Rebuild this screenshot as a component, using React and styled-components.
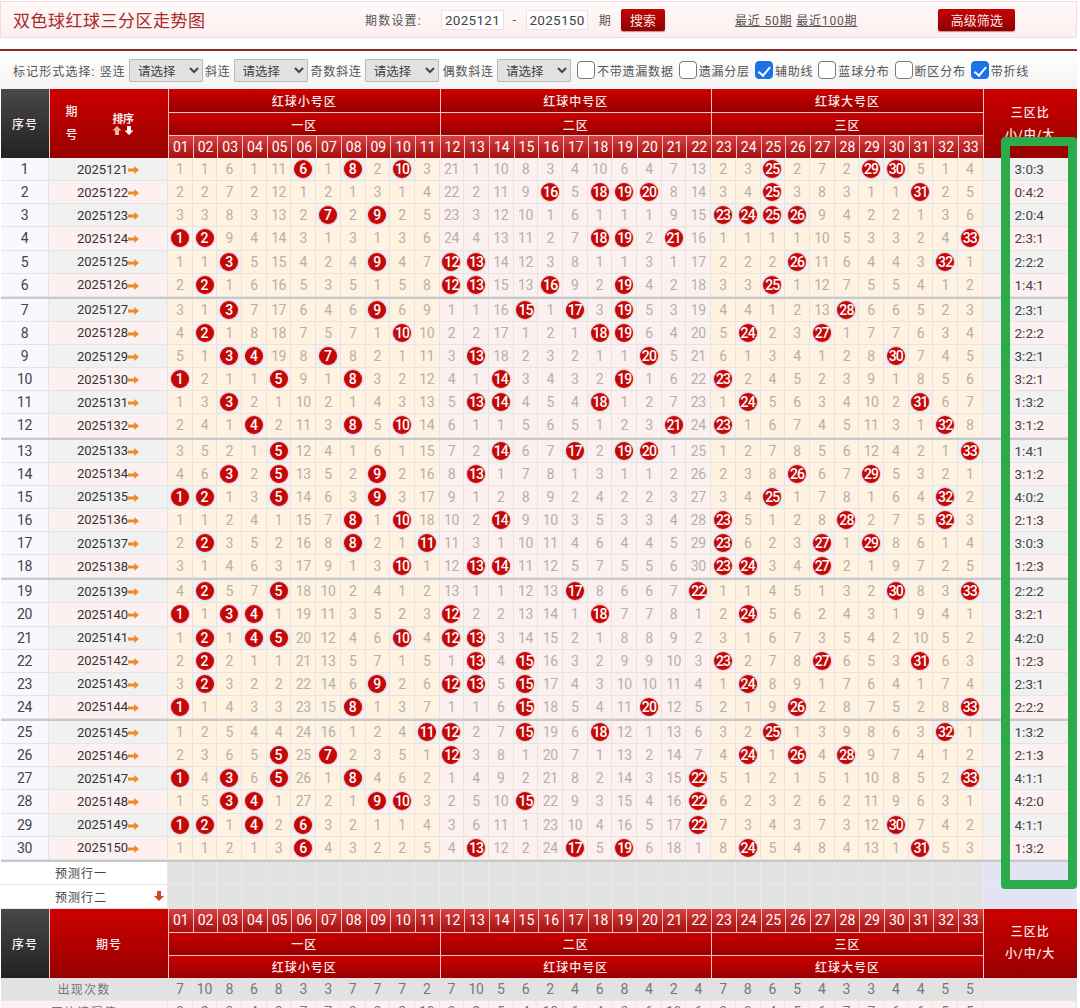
import React from 'react';
import styled, { createGlobalStyle } from 'styled-components';

const GlobalStyle = createGlobalStyle`
  html, body {
    margin: 0;
    padding: 0;
    background: #fff;
    overflow: hidden;
  }
  body {
    font-family: Roboto, "Noto Sans CJK SC", sans-serif;
    color: #333;
  }
`;

const FIRST_ROW = [1, 1, 6, 1, 11, 6, 1, 8, 2, 10, 3, 21, 1, 10, 8, 3, 4, 10, 6, 4, 7, 13, 2, 3, 25, 2, 7, 2, 29, 30, 5, 1, 4];

const DRAWS = [
  [6, 8, 10, 25, 29, 30], [16, 18, 19, 20, 25, 31], [7, 9, 23, 24, 25, 26], [1, 2, 18, 19, 21, 33], [3, 9, 12, 13, 26, 32], [2, 12, 13, 16, 19, 25],
  [3, 9, 15, 17, 19, 28], [2, 10, 18, 19, 24, 27], [3, 4, 7, 13, 20, 30], [1, 5, 8, 14, 19, 23], [3, 13, 14, 18, 24, 31], [4, 8, 10, 21, 23, 32],
  [5, 14, 17, 19, 20, 33], [3, 5, 9, 13, 26, 29], [1, 2, 5, 9, 25, 32], [8, 10, 14, 23, 28, 32], [2, 8, 11, 23, 27, 29], [10, 13, 14, 23, 24, 27],
  [2, 5, 17, 22, 30, 33], [1, 3, 4, 12, 18, 24], [2, 4, 5, 10, 12, 13], [2, 13, 15, 23, 27, 31], [2, 9, 12, 13, 15, 24], [1, 8, 15, 20, 26, 33],
  [11, 12, 15, 18, 25, 32], [5, 7, 12, 24, 26, 28], [1, 3, 5, 8, 22, 33], [3, 4, 9, 10, 15, 22], [1, 2, 4, 6, 22, 30], [6, 13, 17, 19, 24, 31],
];

const NUMBERS = Array.from({ length: 33 }, (_, i) => i + 1);
const pad = (n) => String(n).padStart(2, '0');

// every row is derived from the one above: a hit resets the gap count
const buildRows = () => {
  const rows = [];
  let gaps = FIRST_ROW;
  DRAWS.forEach((draw, i) => {
    if (i > 0) {
      gaps = gaps.map((gap, c) => (DRAWS[i - 1].includes(c + 1) ? 1 : gap + 1));
    }
    const small = draw.filter((n) => n <= 11).length;
    const mid = draw.filter((n) => n > 11 && n <= 22).length;
    rows.push({
      seq: i + 1,
      period: 2025121 + i,
      draw,
      gaps,
      ratio: `${small}:${mid}:${6 - small - mid}`,
    });
  });
  return rows;
};

const ROWS = buildRows();
const COUNTS = NUMBERS.map((n) => DRAWS.filter((d) => d.includes(n)).length);
const AVERAGES = COUNTS.map((c) => Math.floor(30 / (c + 1)));

const COLUMNS = '48px 119px repeat(33, 24.697px) 94px';

const Page = styled.div`
  position: relative;
  width: 1080px;
  height: 1008px;
  overflow: hidden;
`;

const TopBar = styled.div`
  display: flex;
  align-items: center;
  box-sizing: border-box;
  width: 1077px;
  height: 37px;
  margin-top: 1px;
  padding-left: 12px;
  border: 1px solid #f3dcdc;
  background: linear-gradient(#fffafa, #fdeeee);
`;

const Title = styled.h1`
  width: 352px;
  margin: 0;
  font-size: 17px;
  font-weight: 400;
  letter-spacing: 0.5px;
  color: #a92a2a;
  white-space: nowrap;
`;

const BarLabel = styled.span`
  width: ${(p) => p.$width}px;
  font-size: 12px;
  letter-spacing: 1.2px;
  color: #555;
  white-space: nowrap;
  text-align: ${(p) => p.$align || 'left'};
`;

const PeriodInput = styled.input`
  box-sizing: border-box;
  width: ${(p) => p.$width}px;
  height: 20px;
  padding: 0;
  border: 1px solid #f2e0e0;
  background: #fff;
  font-family: Roboto, sans-serif;
  font-size: 13.5px;
  letter-spacing: 0.3px;
  color: #444;
  text-align: center;
  outline: none;
`;

const RedButton = styled.button`
  box-sizing: border-box;
  width: ${(p) => p.$width}px;
  height: 22px;
  margin-left: ${(p) => p.$left}px;
  padding: 0;
  border: none;
  border-radius: 2px;
  background: linear-gradient(#c40404, #8f0000);
  box-shadow: 0 1px 1px rgba(90, 0, 0, 0.4);
  font-family: "Noto Sans CJK SC", sans-serif;
  font-size: 13px;
  color: #fbe6e6;
`;

const QuickLinks = styled.div`
  display: flex;
  gap: 4px;
  margin-left: 70px;
`;

const QuickLink = styled.a`
  font-size: 12px;
  letter-spacing: 0.8px;
  color: #555;
  text-decoration: underline;
  white-space: nowrap;
`;

const Toolbar = styled.div`
  display: flex;
  align-items: center;
  box-sizing: border-box;
  width: 1077px;
  height: 40px;
  margin-top: 11px;
  padding-left: 13px;
  border-top: 2px solid #8e2a2a;
  background: linear-gradient(#fff, #f3f3f3);
`;

const ToolLabel = styled.span`
  margin-left: ${(p) => p.$left || 0}px;
  font-size: 12px;
  letter-spacing: ${(p) => p.$spacing || 0.8}px;
  color: #555;
  white-space: nowrap;
`;

const ToolSelect = styled.select`
  box-sizing: border-box;
  width: 74px;
  height: 23px;
  margin-left: 3px;
  padding: 0 0 0 4px;
  border: 1px solid #b9b9b9;
  border-radius: 1px;
  background-color: #e2e2e2;
  font-family: "Noto Sans CJK SC", sans-serif;
  font-size: 12.5px;
  color: #444;
`;

const ToolCheck = styled.input`
  appearance: none;
  position: relative;
  box-sizing: border-box;
  flex: none;
  width: 18px;
  height: 18px;
  margin: 0 2px 0 ${(p) => p.$left}px;
  border: 1px solid #777;
  border-radius: 4px;
  background: #fff;

  &:checked {
    border-color: #1a73e8;
    background: #1a73e8;
  }

  &:checked::after {
    content: "";
    position: absolute;
    left: 5px;
    top: 1.5px;
    width: 4.5px;
    height: 9.5px;
    border: solid #fff;
    border-width: 0 2px 2px 0;
    transform: rotate(40deg);
  }
`;

const HeaderGrid = styled.div`
  display: grid;
  grid-template-columns: ${COLUMNS};
  grid-template-rows: repeat(3, 23px);
  width: 1076px;
  margin-left: 1px;
  color: #fdeaea;
  font-size: 12px;
`;

const HeaderBlock = styled.div`
  grid-column: ${(p) => p.$column};
  grid-row: 1 / 4;
  display: flex;
  align-items: center;
  justify-content: ${(p) => p.$justify || 'center'};
  background: ${(p) => (p.$dark ? 'linear-gradient(#484848, #222)' : 'linear-gradient(#cc0000, #980000)')};
  border-left: ${(p) => (p.$dark ? 'none' : '1px solid #f2c6c6')};
  font-weight: 500;
  letter-spacing: 1px;
  text-align: center;
`;

const SplitLabel = styled.div`
  line-height: 22px;
`;

const StackLabel = styled.div`
  width: 14px;
  margin-left: 15px;
  line-height: 23px;
`;

const SortBox = styled.div`
  display: flex;
  flex-direction: column;
  align-items: center;
  width: 24px;
  margin-left: 32px;
`;

const SortText = styled.span`
  font-size: 11px;
  font-weight: 700;
  line-height: 13px;
  letter-spacing: -0.5px;
  white-space: nowrap;
`;

const SortArrows = styled.svg`
  display: block;
  width: 24px;
  height: 9px;
`;

const ZoneBand = styled.div`
  grid-column: ${(p) => 3 + p.$zone * 11} / span 11;
  grid-row: ${(p) => p.$row};
  display: flex;
  align-items: center;
  justify-content: center;
  background: linear-gradient(#cc0000, #980000);
  border-left: 1px solid #f2c6c6;
  border-top: ${(p) => (p.$row === 1 ? 'none' : '1px solid #f2c6c6')};
  font-weight: 500;
  letter-spacing: 1px;
`;

const NumberHead = styled.div`
  grid-row: ${(p) => p.$row};
  display: flex;
  align-items: center;
  justify-content: center;
  background: linear-gradient(#da4040, #a50f0f);
  border-left: 1px solid #f2c6c6;
  border-top: ${(p) => (p.$row === 1 ? 'none' : '1px solid #f2c6c6')};
  font-family: Roboto, sans-serif;
  font-size: 14px;
  color: #fff;
`;

const DataRow = styled.div`
  display: grid;
  grid-template-columns: ${COLUMNS};
  width: 1076px;
  height: ${(p) => p.$height || '23.13px'};
  margin-left: 1px;
  box-sizing: content-box;
  border-bottom: ${(p) => (p.$last ? '2px solid #c9c9c9' : 'none')};
`;

const Cell = styled.div`
  display: flex;
  align-items: center;
  justify-content: center;
  box-sizing: border-box;
  min-width: 0;
  border-right: 1px solid #e7e3dd;
  border-bottom: 1px solid #e7e3dd;
  background: ${(p) => p.$bg};
  font-size: 14px;
  letter-spacing: -0.4px;
  color: #b5b1aa;
`;

const SeqCell = styled(Cell)`
  background: #f8f8fe;
  border-color: #e4e4e4;
  color: #444;
`;

const PeriodCell = styled(Cell)`
  background: ${(p) => (p.$odd ? '#f1f1f1' : '#fdf0f0')};
  border-color: #e4e4e4;
  font-size: 13px;
  letter-spacing: 0;
  color: #333;
`;

const RatioCell = styled(Cell)`
  background: ${(p) => (p.$odd ? '#f1f1f1' : '#fdf0f0')};
  border-color: #e4e4e4;
  font-size: 13.5px;
  letter-spacing: 0;
  color: #444;
`;

const Ball = styled.span`
  display: flex;
  align-items: center;
  justify-content: center;
  width: 18px;
  height: 18px;
  border-radius: 50%;
  background: #c40808;
  box-shadow: 0 0 1px 1px rgba(226, 110, 110, 0.35);
  font-weight: 500;
  letter-spacing: ${(p) => (p.$wide ? '-0.9px' : '0')};
  color: #fff;
`;

const RowArrow = styled.svg`
  display: block;
  flex: none;
  width: 11px;
  height: 8px;
  margin-top: 2px;
`;

const WideCell = styled.div`
  grid-column: 1 / 3;
  display: flex;
  align-items: center;
  justify-content: center;
  position: relative;
  box-sizing: border-box;
  padding-right: ${(p) => p.$shift || 0}px;
  background: ${(p) => p.$bg};
  border-right: 1px solid #e6e6e6;
  border-bottom: 1px solid #e6e6e6;
  font-size: 12px;
  letter-spacing: ${(p) => p.$spacing || 1}px;
  color: ${(p) => p.$color};
`;

const DownMark = styled.svg`
  position: absolute;
  right: 3px;
  top: 6px;
  width: 10px;
  height: 10px;
`;

const PredictCell = styled.div`
  box-sizing: border-box;
  background: ${(p) => p.$bg};
  border-right: 1px solid #e9e9e9;
  border-bottom: 1px solid #e9e9e9;
`;

const StatCell = styled(Cell)`
  background: ${(p) => p.$bg};
  border-color: #e9e5e5;
  letter-spacing: -0.2px;
  color: #777;
`;

const Highlight = styled.div`
  position: absolute;
  left: 1001px;
  top: 137px;
  box-sizing: border-box;
  width: 76px;
  height: 752px;
  border: 9px solid #2cab4a;
  border-radius: 4px;
  pointer-events: none;
`;

const ZONES = [
  { name: '红球小号区', area: '一区' },
  { name: '红球中号区', area: '二区' },
  { name: '红球大号区', area: '三区' },
];

const zoneOf = (index) => Math.floor(index / 11);

const missBg = (index) => (zoneOf(index) === 1 ? '#fdf0f0' : '#fff2e0');

const HeaderCells = ({ numberRow, nameRow, areaRow }) => (
  <>
    {ZONES.map((zone, z) => (
      <React.Fragment key={zone.name}>
        <ZoneBand $zone={z} $row={nameRow}>{zone.name}</ZoneBand>
        <ZoneBand $zone={z} $row={areaRow}>{zone.area}</ZoneBand>
      </React.Fragment>
    ))}
    {NUMBERS.map((n) => (
      <NumberHead key={n} $row={numberRow}>{pad(n)}</NumberHead>
    ))}
  </>
);

const TrendRow = ({ row }) => {
  const odd = row.seq % 2 === 1;
  return (
    <DataRow $last={row.seq % 6 === 0}>
      <SeqCell>{row.seq}</SeqCell>
      <PeriodCell $odd={odd}>
        {row.period}
        <RowArrow viewBox="0 0 11 8">
          <path d="M0 2.6h6.2V0L11 4 6.2 8V5.4H0z" fill="#ee8a2a" />
        </RowArrow>
      </PeriodCell>
      {row.gaps.map((gap, c) => {
        const hit = row.draw.includes(c + 1);
        return (
          <Cell key={c} $bg={hit ? (odd ? '#f1f1f1' : '#fdf0f0') : missBg(c)}>
            {hit ? <Ball $wide={c >= 9}>{c + 1}</Ball> : gap}
          </Cell>
        );
      })}
      <RatioCell $odd={odd}>{row.ratio}</RatioCell>
    </DataRow>
  );
};

const PredictRow = ({ label, mark }) => (
  <DataRow $height="23.4px">
    <WideCell $bg="#fff" $color="#444" $shift={6}>
      {label}
      {mark && (
        <DownMark viewBox="0 0 10 10">
          <path d="M3 0h4v5h3L5 10 0 5h3z" fill="#d0481e" />
        </DownMark>
      )}
    </WideCell>
    {NUMBERS.map((n) => (
      <PredictCell key={n} $bg="#e2e2e2" />
    ))}
    <PredictCell $bg="#e3e4f3" />
  </DataRow>
);

const StatRow = ({ label, values, bg }) => (
  <DataRow $height="23px">
    <WideCell $bg={bg} $color="#777" $spacing={1.2}>{label}</WideCell>
    {values.map((value, i) => (
      <StatCell key={i} $bg={bg}>{value}</StatCell>
    ))}
    <StatCell $bg={bg} />
  </DataRow>
);

const App = () => (
  <Page>
    <GlobalStyle />
    <TopBar>
      <Title>双色球红球三分区走势图</Title>
      <BarLabel $width={76}>期数设置:</BarLabel>
      <PeriodInput $width={63} defaultValue="2025121" />
      <BarLabel $width={22} $align="center">-</BarLabel>
      <PeriodInput $width={62} defaultValue="2025150" />
      <BarLabel $width={24} $align="right">期</BarLabel>
      <RedButton $width={44} $left={9}>搜索</RedButton>
      <QuickLinks>
        <QuickLink>最近 50期</QuickLink>
        <QuickLink>最近100期</QuickLink>
      </QuickLinks>
      <RedButton $width={77} $left={81}>高级筛选</RedButton>
    </TopBar>
    <Toolbar>
      <ToolLabel $spacing={1.1}>标记形式选择: 竖连</ToolLabel>
      <ToolSelect><option>请选择</option></ToolSelect>
      <ToolLabel $left={2}>斜连</ToolLabel>
      <ToolSelect><option>请选择</option></ToolSelect>
      <ToolLabel $left={3}>奇数斜连</ToolLabel>
      <ToolSelect><option>请选择</option></ToolSelect>
      <ToolLabel $left={4}>偶数斜连</ToolLabel>
      <ToolSelect><option>请选择</option></ToolSelect>
      <ToolCheck type="checkbox" $left={6} />
      <ToolLabel>不带遗漏数据</ToolLabel>
      <ToolCheck type="checkbox" $left={5} />
      <ToolLabel>遗漏分层</ToolLabel>
      <ToolCheck type="checkbox" $left={5} defaultChecked />
      <ToolLabel>辅助线</ToolLabel>
      <ToolCheck type="checkbox" $left={5} />
      <ToolLabel>蓝球分布</ToolLabel>
      <ToolCheck type="checkbox" $left={5} />
      <ToolLabel>断区分布</ToolLabel>
      <ToolCheck type="checkbox" $left={5} defaultChecked />
      <ToolLabel>带折线</ToolLabel>
    </Toolbar>
    <HeaderGrid>
      <HeaderBlock $column={1} $dark>序号</HeaderBlock>
      <HeaderBlock $column={2} $justify="flex-start">
        <StackLabel>期 号</StackLabel>
        <SortBox>
          <SortText>排序</SortText>
          <SortArrows viewBox="0 0 24 9">
            <path d="M6 0l4.5 4.5H8V9H4V4.5H1.5z" fill="#eeb79a" />
            <path d="M16 0h4v4.5h2.5L18 9l-4.5-4.5H16z" fill="#fff" />
          </SortArrows>
        </SortBox>
      </HeaderBlock>
      <HeaderCells nameRow={1} areaRow={2} numberRow={3} />
      <HeaderBlock $column={36}>
        <SplitLabel>三区比<br />小/中/大</SplitLabel>
      </HeaderBlock>
    </HeaderGrid>
    {ROWS.map((row) => (
      <TrendRow key={row.seq} row={row} />
    ))}
    <PredictRow label="预测行一" />
    <PredictRow label="预测行二" mark />
    <HeaderGrid>
      <HeaderBlock $column={1} $dark>序号</HeaderBlock>
      <HeaderBlock $column={2}>期号</HeaderBlock>
      <HeaderCells numberRow={1} areaRow={2} nameRow={3} />
      <HeaderBlock $column={36}>
        <SplitLabel>三区比<br />小/中/大</SplitLabel>
      </HeaderBlock>
    </HeaderGrid>
    <StatRow label="出现次数" values={COUNTS} bg="#e2e2e2" />
    <StatRow label="平均遗漏值" values={AVERAGES} bg="#fdf0f0" />
    <Highlight />
  </Page>
);

export default App;
